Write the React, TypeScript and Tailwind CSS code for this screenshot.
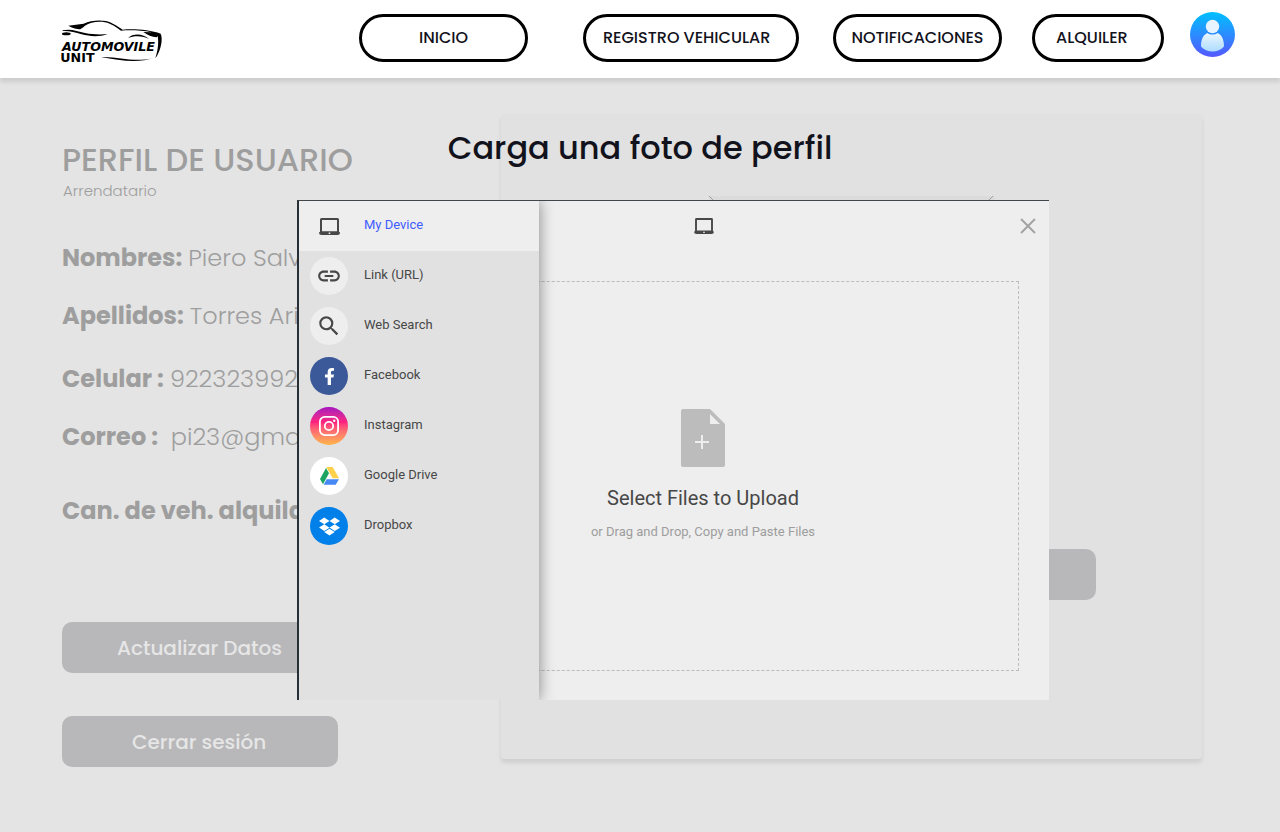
import React from "react";
import { MdLink, MdSearch } from "react-icons/md";
import { FaFacebookF, FaDropbox } from "react-icons/fa";

function Logo() {
  return (
    <svg viewBox="60 56 309 150" className="h-[50px] w-[103px]" role="img" aria-label="Automovile Unit">
      <path d="M85 76 L131 70 C150 61 175 58 198 62 C220 68 235 80 248 88 C285 85 330 89 362 100 L364 106 C368 125 360 155 346 174 C353 152 357 128 353 107 L350 111 C336 110 322 104 310 95 L335 96 C305 90 270 89 243 91 C230 82 215 70 195 66 C172 62 150 67 135 76 C128 82 122 87 117 87 C104 85 94 81 85 76Z" />
      <path d="M68 90 C90 84 112 92 135 98 C160 103 185 103 203 101 C180 110 150 109 125 102 C105 96 88 91 68 92Z" />
      <ellipse cx="79" cy="100" rx="13" ry="4.5" />
      <path d="M264 113 C280 97 310 100 327 116 C310 107 285 105 264 113Z" />
      <path d="M183 170 C240 168 280 188 340 173 C300 188 240 182 183 170Z" />
      <text x="66" y="153" className="font-['DejaVu_Sans'] text-[38px] font-bold italic">AUTOMOVILE</text>
      <text x="61" y="186" className="font-['DejaVu_Sans'] text-[38px] font-bold">UNIT</text>
    </svg>
  );
}

function Avatar() {
  return (
    <svg viewBox="0 0 45 45" className="size-[45px]" aria-hidden="true">
      <defs>
        <linearGradient id="avatarBg" x1="0" y1="0" x2="0" y2="1">
          <stop offset="0" stopColor="#00c0ff" />
          <stop offset="1" stopColor="#5558ff" />
        </linearGradient>
        <linearGradient id="avatarFg" x1="0" y1="0" x2="0" y2="1">
          <stop offset="0" stopColor="#ecf6ff" />
          <stop offset="1" stopColor="#addcff" />
        </linearGradient>
      </defs>
      <circle cx="22.5" cy="22.5" r="22.5" fill="url(#avatarBg)" />
      <circle cx="22.5" cy="14.5" r="6.7" fill="#e6f4ff" />
      <path d="M17.5 21 C20 23 25 23 27.5 21 C31.500 22.500 34 27 34 34.500 C31 38 27 39.500 22.500 39.500 C18 39.500 14 38 11 34.500 C11 27 13.500 22.500 17.500 21Z" fill="url(#avatarFg)" />
    </svg>
  );
}

function Laptop({ className }: { className: string }) {
  return (
    <svg viewBox="0 0 21 17" className={className} aria-hidden="true">
      <path fill="#474747" fillRule="evenodd" d="M2.500 0 H18.500 Q20 0 20 1.500 V14 H20.300 Q21 14 21 14.800 Q21 17 18.500 17 H2.500 Q0 17 0 14.800 Q0 14 .700 14 H1 V1.500 Q1 0 2.500 0Z M3 2 V13.200 H18 V2Z M9.700 14.500 V16 H11.300 V14.500Z" />
    </svg>
  );
}

function Instagram() {
  return (
    <svg viewBox="0 0 20 20" className="size-5" fill="none" stroke="#fff" strokeWidth="1.8" aria-hidden="true">
      <rect x="0.9" y="0.9" width="18.200" height="18.200" rx="4.800" />
      <circle cx="10" cy="10" r="4.200" />
      <circle cx="15.200" cy="4.800" r="1.200" fill="#fff" stroke="none" />
    </svg>
  );
}

function Drive() {
  return (
    <svg viewBox="0 0 57 54" className="h-[18px] w-[19px]" aria-hidden="true">
      <path fill="#ffd04b" d="M19 0 H38 L57 34 H38Z" />
      <path fill="#1da462" d="M18 3 L27 19 L9 52 L0 36Z" />
      <path fill="#4688f4" d="M20 37 H57 L47 53 H11Z" />
    </svg>
  );
}

const sources = [
  { name: "My Device", bg: "", icon: <Laptop className="h-[17px] w-[21px]" /> },
  { name: "Link (URL)", bg: "bg-[#eeeeee]", icon: <MdLink size={26} /> },
  { name: "Web Search", bg: "bg-[#eeeeee]", icon: <MdSearch size={26} /> },
  { name: "Facebook", bg: "bg-[#3b5998]", icon: <FaFacebookF size={17} color="#fff" /> },
  { name: "Instagram", bg: "bg-linear-to-b from-[#a50dbd] via-[#ff1f7e] via-40% to-[#ffb545]", icon: <Instagram /> },
  { name: "Google Drive", bg: "bg-white", icon: <Drive /> },
  { name: "Dropbox", bg: "bg-[#0080e8]", icon: <FaDropbox size={21} color="#fff" /> },
];

const navButton = "flex h-12 items-center rounded-full border-3 border-black text-base font-medium text-[#12121c]";

function Header() {
  return (
    <header className="relative z-10 flex h-[78px] shrink-0 items-start bg-white pr-[45px] pl-[60px] shadow-[0_4px_4px_rgba(0,0,0,0.1)]">
      <a href="#inicio" className="pt-[19px]">
        <Logo />
      </a>
      <nav className="ml-auto flex pt-[14px]">
        <button className={`${navButton} mr-[55px] w-[169px] justify-center`}>INICIO</button>
        <button className={`${navButton} mr-[34px] w-[216px] pl-[17px]`}>REGISTRO VEHICULAR</button>
        <button className={`${navButton} mr-[30px] w-[169px] justify-center`}>NOTIFICACIONES</button>
        <button className={`${navButton} mr-[26px] w-[132px] pl-[21px]`}>ALQUILER</button>
      </nav>
      <button aria-label="Perfil" className="pt-3">
        <Avatar />
      </button>
    </header>
  );
}

function Field({ label, value }: { label: string; value: string }) {
  return (
    <div className="flex h-9 items-center gap-1.5 text-2xl whitespace-pre">
      <dt className="font-bold">{label}</dt>
      <dd className="font-light">{value}</dd>
    </div>
  );
}

const action = "flex h-[51px] w-[276px] items-center rounded-[10px] bg-[#b8b8ba] text-xl font-medium text-[#e6e6e6]";

function Profile() {
  return (
    <main className="flex flex-1 pr-[78px] pb-[64px] pl-[62px] text-[#9e9e9e]">
      <section className="w-[439px] shrink-0 pt-[62px]">
        <h1 className="text-[32px] leading-10 font-medium">PERFIL DE USUARIO</h1>
        <p className="h-6 pl-px text-[15px] leading-[22px] font-light">Arrendatario</p>
        <dl className="pt-9">
          <Field label="Nombres:" value="Piero Salv" />
          <div className="h-[22px]" />
          <Field label="Apellidos:" value="Torres Ari" />
          <div className="h-[27px]" />
          <Field label="Celular :" value="922323992" />
          <div className="h-[22px]" />
          <Field label="Correo :" value=" pi23@gma" />
          <div className="h-[38px]" />
          <Field label="Can. de veh. alquila" value="" />
        </dl>
        <button className={`${action} mt-[93px] pl-[55px]`}>Actualizar Datos</button>
        <button className={`${action} mt-[43px] pl-[70px]`}>Cerrar sesión</button>
      </section>
      <section className="mt-[36px] flex h-[645px] flex-1 flex-col rounded-sm bg-[#e1e1e1] pt-[82px] shadow-[0_4px_4px_rgba(0,0,0,0.09)]">
        <svg viewBox="0 0 286 286" className="h-[286px] w-[286px] shrink-0 self-center bg-[#dbdbdb]" stroke="#9e9e9e" aria-hidden="true">
          <path d="M0 0 L286 286 M284 0 L0 286" />
        </svg>
        <button aria-label="Subir foto" className={`${action} mt-[67px] mr-[106px] shrink-0 self-end`} />
      </section>
    </main>
  );
}

function Picker() {
  return (
    <div className="absolute inset-x-0 top-0 flex flex-col items-center pt-[123px]" role="dialog" aria-labelledby="picker-title">
      <h2 id="picker-title" className="text-[32px] leading-[50px] font-medium text-[#12121c]">
        Carga una foto de perfil
      </h2>
      <div className="relative mt-[27px] ml-[66px] flex h-[500px] w-[752px] flex-col border-t border-l-2 border-t-[#40464a] border-l-[#263036] bg-[#eeeeee] font-[Roboto,sans-serif] text-[#474747]">
        <div className="flex h-[50px] shrink-0 items-center pl-[395px]">
          <Laptop className="h-4 w-5" />
          <button aria-label="Cerrar" className="mr-[13px] ml-auto">
            <svg viewBox="0 0 16 16" className="size-4" stroke="#a3a3a3" strokeWidth="2" aria-hidden="true">
              <path d="M1 1 L15 15 M15 1 L1 15" />
            </svg>
          </button>
        </div>
        <button className="mt-[30px] mr-[30px] mb-[29px] ml-[88px] flex flex-1 flex-col items-center justify-center border border-dashed border-[#bcbcbc] pt-px">
          <svg viewBox="0 0 44 58" className="h-[58px] w-[44px]" aria-hidden="true">
            <path fill="#bcbcbc" d="M2 0 H29 L44 15 V56 Q44 58 42 58 H2 Q0 58 0 56 V2 Q0 0 2 0Z" />
            <path fill="#eee" d="M29 5 V15 H39Z M20 26 H22 V32 H28 V34 H22 V40 H20 V34 H14 V32 H20Z" />
          </svg>
          <span className="mt-4 text-xl leading-[30px]">Select Files to Upload</span>
          <span className="mt-[7px] text-[13px] leading-6 text-[#9d9d9d]">or Drag and Drop, Copy and Paste Files</span>
        </button>
        <ul className="absolute inset-y-0 left-0 w-60 bg-[#e1e1e1] [clip-path:inset(0_-20px_0_0)] shadow-[0_0_14px_rgba(0,0,0,0.45)]">
          {sources.map((s, i) => (
            <li key={s.name}>
              <button className={`flex h-[50px] w-full items-center pl-[11px] text-[13px] ${i === 0 ? "bg-[#eeeeee] text-[#3f5cff]" : ""}`}>
                <span className={`flex size-[38px] items-center justify-center rounded-full text-[#474747] ${s.bg}`}>{s.icon}</span>
                <span className="pb-0.5 pl-4">{s.name}</span>
              </button>
            </li>
          ))}
        </ul>
      </div>
    </div>
  );
}

export default function App() {
  return (
    <div className="relative flex min-h-screen flex-col bg-[#e4e4e4] font-[Poppins,Inter,sans-serif]">
      <Header />
      <Profile />
      <div className="absolute inset-0 z-20 h-0">
        <Picker />
      </div>
    </div>
  );
}
